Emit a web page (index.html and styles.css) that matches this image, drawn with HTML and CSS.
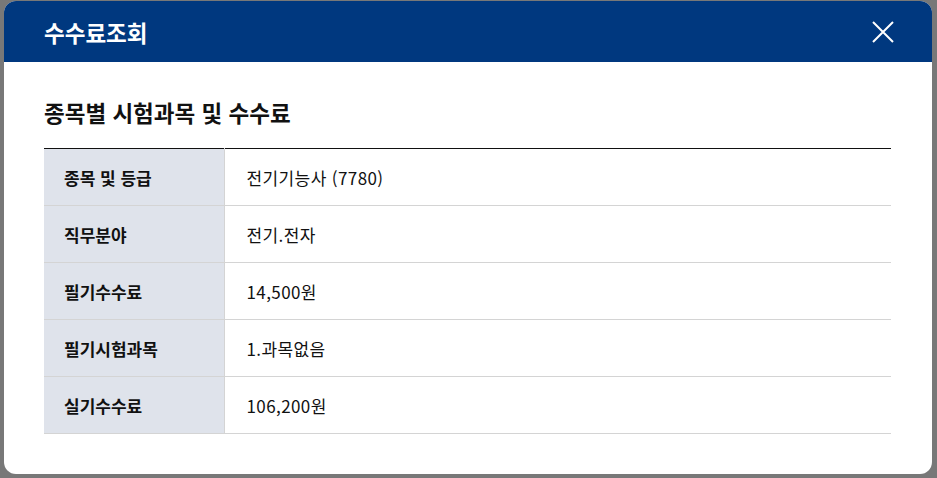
FILE: index.html
```html
<!DOCTYPE html>
<html lang="ko">
<head>
<meta charset="utf-8">
<link rel="stylesheet" href="styles.css">
</head>
<body>
<div class="overlay">
  <div class="modal">
    <div class="modal-head">
      <h1 class="modal-title">수수료조회</h1>
      <button class="close" aria-label="닫기">
        <svg width="22" height="22" viewBox="0 0 22 22"><path d="M1 1L21 21M21 1L1 21" stroke="#fff" stroke-width="2" fill="none"/></svg>
      </button>
    </div>
    <div class="modal-body">
      <h2 class="section-title">종목별 시험과목 및 수수료</h2>
      <table class="fee-table">
        <tr><th>종목 및 등급</th><td>전기기능사 (7780)</td></tr>
        <tr><th>직무분야</th><td>전기.전자</td></tr>
        <tr><th>필기수수료</th><td>14,500원</td></tr>
        <tr><th>필기시험과목</th><td>1.과목없음</td></tr>
        <tr><th>실기수수료</th><td>106,200원</td></tr>
      </table>
    </div>
  </div>
</div>
</body>
</html>
```
FILE: styles.css
```css
html, body { margin: 0; padding: 0; }
body {
  width: 937px; height: 478px; overflow: hidden;
  background: #787878;
  font-family: "Noto Sans CJK KR", "Noto Sans", sans-serif;
}
.overlay { padding: 1px 5px 4px 4px; box-sizing: border-box; height: 478px; }
.modal {
  background: #fff;
  border-radius: 12px;
  overflow: hidden;
  height: 473px;
}
.modal-head {
  background: #00387f;
  height: 61px;
  display: flex;
  align-items: center;
  justify-content: space-between;
  padding: 0 40px;
}
.modal-title {
  margin: 0;
  color: #fff;
  font-size: 22.5px;
  font-weight: 700;
  letter-spacing: 0;
}
.close {
  background: none; border: 0; padding: 0; margin-right: -2px;
  width: 22px; height: 22px; display: block; cursor: pointer;
}
.close svg { display: block; }
.modal-body { padding: 35px 40px 0 40px; }
.section-title {
  margin: 0 0 21px;
  font-size: 22.5px;
  font-weight: 700;
  color: #111;
  letter-spacing: 0;
  line-height: 30px;
}
.fee-table {
  width: 847px;
  border-collapse: collapse;
  border-top: 1px solid #111;
}
.fee-table th, .fee-table td {
  height: 56px;
  padding: 0;
  border-bottom: 1px solid #d4d4d4;
  font-size: 17px;
  color: #111;
  text-align: left;
}
.fee-table th {
  width: 180px;
  background: #dfe3eb;
  font-weight: 700;
  padding-left: 20px;
  box-sizing: border-box;
  border-right: 1px solid #d4d4d4;
}
.fee-table td { padding-left: 22px; font-weight: 400; letter-spacing: 0.4px; }
```
